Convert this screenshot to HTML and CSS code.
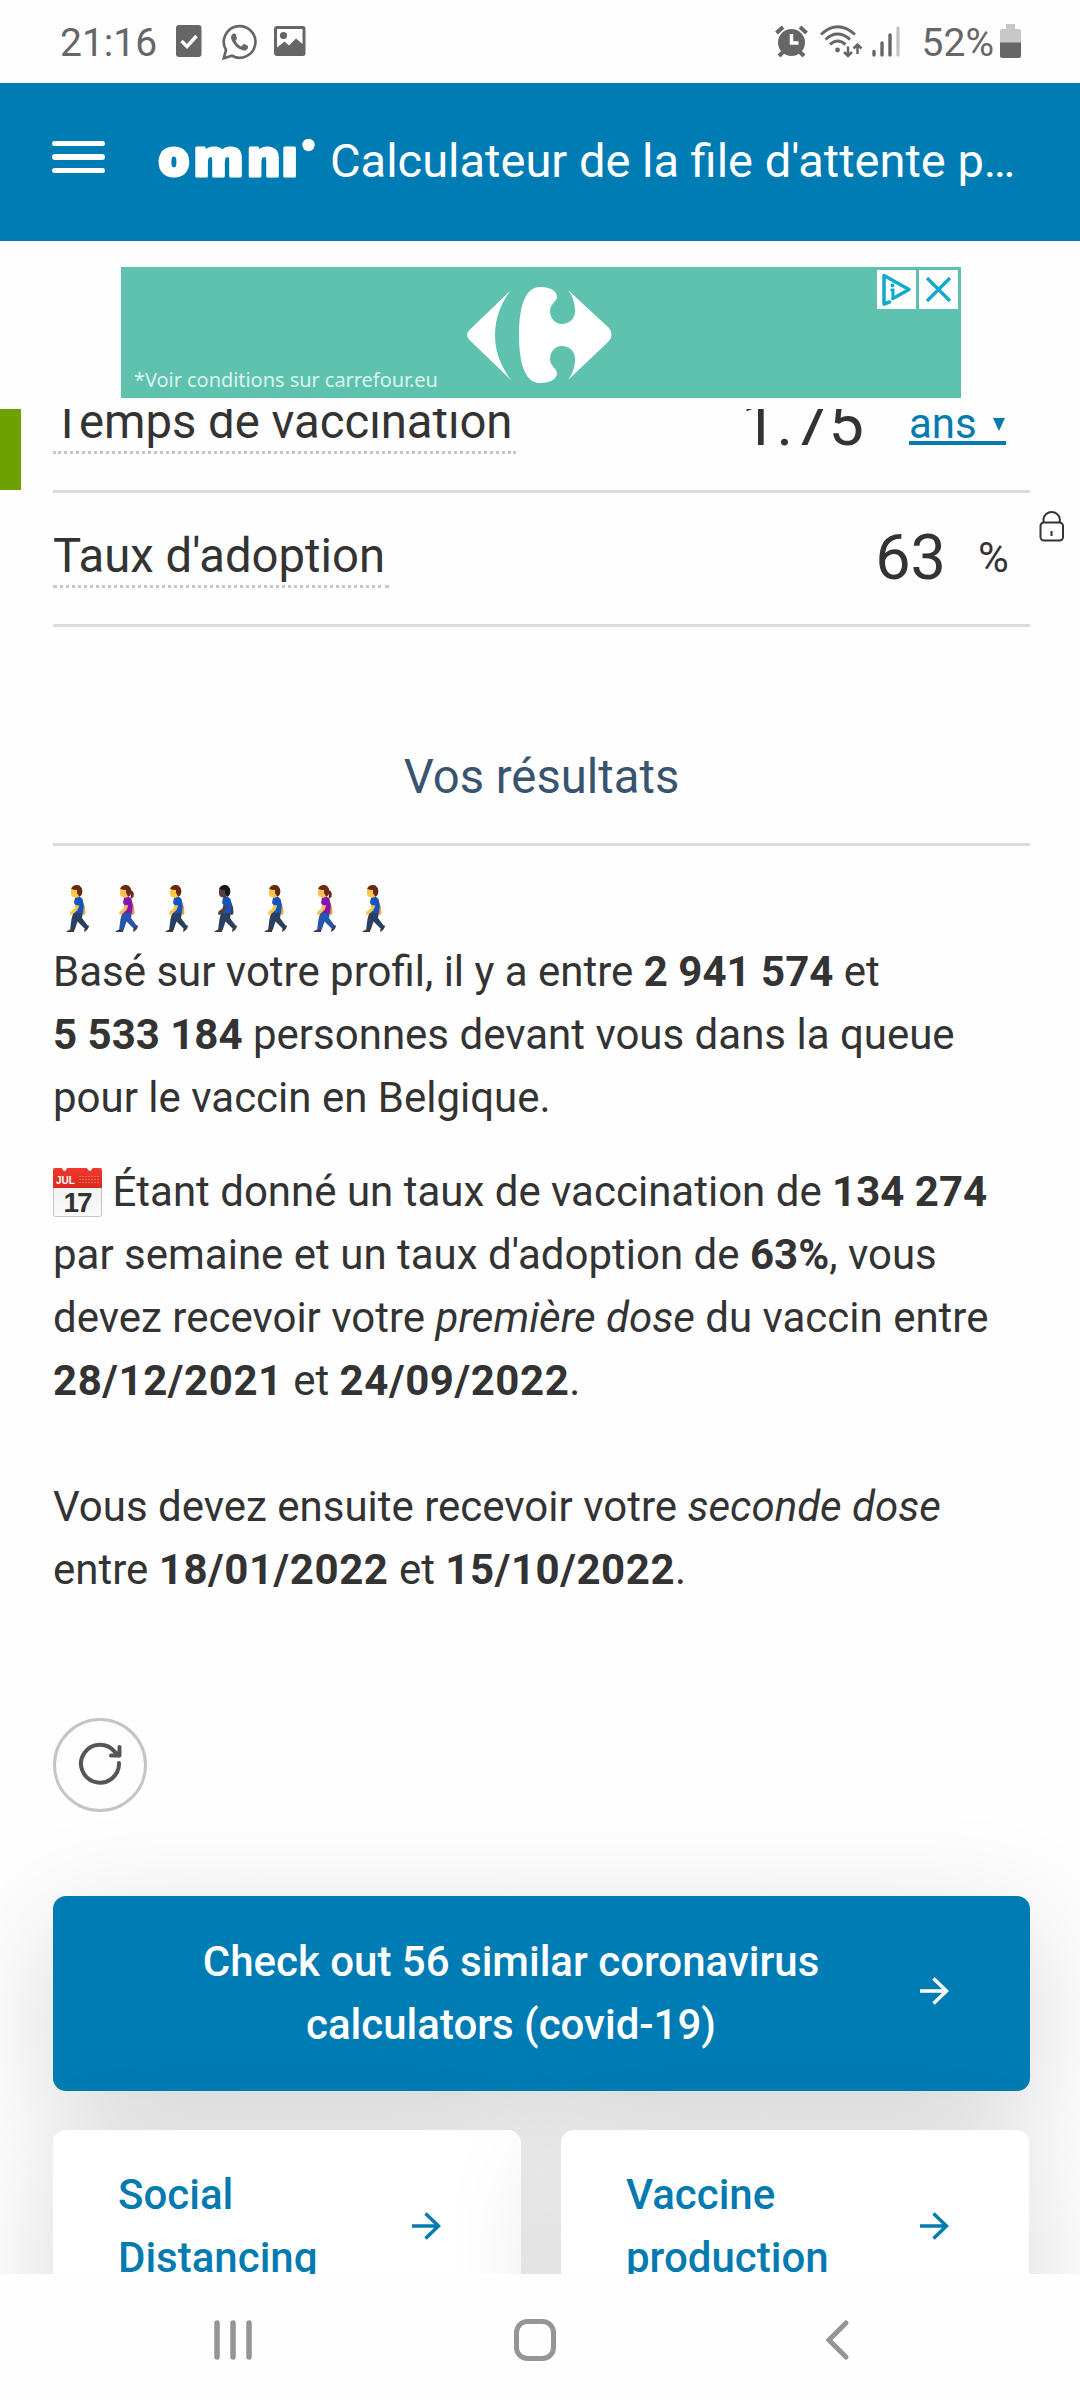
FILE: index.html
```html
<!DOCTYPE html>
<html lang="fr">
<head>
<meta charset="utf-8">
<title>Calculateur de la file d'attente</title>
<link rel="stylesheet" href="styles.css">
</head>
<body>
<svg class="defs" width="0" height="0">
  <defs>
    <linearGradient id="calRed" x1="0" y1="0" x2="0" y2="1"><stop offset="0" stop-color="#f0392c"/><stop offset="1" stop-color="#d92a20"/></linearGradient>
    <linearGradient id="calPaper" x1="0" y1="0" x2="0" y2="1"><stop offset="0" stop-color="#ececec"/><stop offset="1" stop-color="#fafafa"/></linearGradient>
    <g id="walker">
      <path class="far-arm" d="M17 17 L19 22 L19.5 28 L18 30.5 L15 27Z"/>
      <path class="legs" d="M7.5 27 H17 L16 33 L22 41 L19.5 44.5 L11.5 36.5 L8.5 45.5 H4 L5.5 34Z"/>
      <path class="shoe" d="M0.5 46.5 Q4 43.5 8 45 V47 H0.5Z M18.5 44 L22 40 L23 41 Q22 45.5 18 47Z"/>
      <path class="shirt" d="M9 12.5 Q14 10.5 16.5 14 L17.8 20 L17 28 H8 L9.5 20 L8 18Z"/>
      <path class="arm" d="M9.5 20 L13.3 20.5 L11.5 25 L6 30 L4 29.5 L4.5 26.5 L8.5 23.5Z"/>
      <path class="face" d="M5.5 3 Q9 0 13 4 L13.5 11 L10.5 13 L6 11.5 Q4 8 5.5 3Z"/>
      <path class="hair" d="M5 3.5 Q8 -1.5 13.5 0.5 Q18 4 15.5 10 L13.5 12 L11 8 V5 Q8 5.5 5 3.5Z"/>
    </g>
    <path id="ponytail" d="M14 5 Q20 5 18.5 12 L15.5 14 L16 9Z"/>
  </defs>
</svg>

<div class="status">
  <span class="clock">21:16</span>
  <svg class="st-task" width="26" height="32" viewBox="0 0 26 32"><rect width="25.5" height="32" rx="3" fill="#666"/><path d="M5.5 16 L11 21.5 L20.5 11" fill="none" stroke="#fff" stroke-width="3.5"/></svg>
  <svg class="st-wa" width="35" height="36" viewBox="0 0 35 36"><path d="M1.8 34.2 L4 26 A15.8 15.8 0 1 1 10 31.8 Z" fill="none" stroke="#666" stroke-width="2.7"/><path d="M11.5 9.5 C9 10.5 8.5 13 9.5 15.5 C12 21.5 16 25 21.5 26.5 C24 27 26.5 25 26 22 L22 19.8 L19.2 22.5 C17 21.5 14.5 19 13.5 17 L15 14.5 L13.5 9.8Z" fill="#666"/></svg>
  <svg class="st-pic" width="32" height="30" viewBox="0 0 32 30"><path fill-rule="evenodd" fill="#666" d="M3 0 H29 Q31.5 0 31.5 3 V27 Q31.5 30 29 30 H3 Q0 30 0 27 V3 Q0 0 3 0Z M3 3 V21.5 L10.5 15.5 L15 19.5 L22 12.5 L28.5 18 V3Z"/><circle cx="9.5" cy="9.5" r="3.6" fill="#666"/></svg>
  <span class="spacer"></span>
  <svg class="st-alarm" width="33" height="33" viewBox="0 0 33 33"><circle cx="16.5" cy="17.5" r="13.5" fill="#666"/><path d="M1.5 8 L8 2 M25 2 L31.5 8 M4 31 L8 27 M29 31 L25 27" stroke="#666" stroke-width="4"/><path d="M16.5 9 V18 H23.5" fill="none" stroke="#fff" stroke-width="3.5"/></svg>
  <svg class="st-wifi" width="43" height="33" viewBox="0 0 43 33"><g fill="none" stroke="#666" stroke-width="3"><path d="M1 9.5 Q17.5 -6 35 9.5"/><path d="M5.5 14.5 Q17.5 3.5 30 14.5"/><path d="M10 19.5 Q17.5 12.5 25.5 19.5"/><path d="M28 21.5 V31 M24 27 L28 31 L32 27 M37.5 29 V19 M33.5 23.5 L37.5 19.5 L41.5 23.5" stroke-width="2.5"/></g><circle cx="17.5" cy="25" r="2.4" fill="#666"/></svg>
  <svg class="st-signal" width="28" height="31" viewBox="0 0 28 31"><g stroke-width="3.4" stroke-linecap="round" stroke="#666"><path d="M2 25.5 V29 M10 17 V29 M18 9 V29"/><path d="M26 2 V29" stroke="#c6c6c6"/></g></svg>
  <span class="pct">52%</span>
  <svg class="st-batt" width="21" height="34" viewBox="0 0 21 34"><path d="M6 0 H15 V5 H19 Q21 5 21 7 V19 H0 V7 Q0 5 2 5 H6Z" fill="#c8c8c8"/><path d="M0 18.5 H21 V32 Q21 34 19 34 H2 Q0 34 0 32Z" fill="#666"/></svg>
</div>

<header class="bar">
  <div class="burger"><i></i><i></i><i></i></div>
  <svg class="logo" width="164" height="50" viewBox="0 0 164 50" role="img" aria-label="omni"><text class="logo-text" y="42" x="1 36.5 90 124.5">omnı</text><circle cx="151.5" cy="11" r="6.2" fill="#fff"/></svg>
  <span class="bar-title">Calculateur de la file d'attente p…</span>
</header>

<div class="ad-slot">
  <div class="ad">
    <span class="ad-note">*Voir conditions sur carrefour.eu</span>
    <svg class="ad-logo" width="146" height="98" viewBox="467 286 146 98"><path fill="#fff" d="M511 290 L469 330.5 Q465 335 469 339.5 L511 380 Q495 359 495 335 Q495 311 511 290Z M540 287 C553 287 557 293 557 297 C557 301 550 304 550 311 C550 318 555 324 562 324 C569 324 575 319 575 311 C575 303 573 297 568 290 L609 328 Q614 335 609 341 L568 380 C573 373 575 367 575 359 C575 351 569 346 562 346 C555 346 550 352 550 359 C550 366 557 369 557 373 C557 377 553 383 540 383 C524 383 519 360 519 335 C519 310 524 287 540 287Z"/></svg>
    <div class="ad-choices">
      <svg width="39" height="39" viewBox="0 0 39 39"><rect width="39" height="39" fill="#fff"/><path d="M12.5 32 L7 34 V5.5 L32 19.5 L16 28.5" fill="none" stroke="#10aacb" stroke-width="3.5" stroke-linejoin="round" stroke-linecap="round"/><path d="M13.5 20 H16 V29" fill="none" stroke="#10aacb" stroke-width="3"/><circle cx="15.5" cy="15.5" r="2" fill="#10aacb"/></svg>
      <svg width="39" height="39" viewBox="0 0 39 39"><rect width="39" height="39" fill="#fff"/><path d="M8 8 L31 31 M31 8 L8 31" stroke="#10aacb" stroke-width="3.3"/></svg>
    </div>
  </div>
</div>

<main class="page">
  <div class="row row-first">
    <span class="marker marker-on"></span>
    <div class="field">
      <span class="label">Temps de vaccination</span>
      <span class="value">1.75</span>
      <span class="unit"><a class="link">ans <svg width="12" height="13" viewBox="0 0 12 13"><path d="M0 0 H12 L6 13Z" fill="#047bb0"/></svg></a></span>
    </div>
  </div>
  <div class="row">
    <span class="marker"></span>
    <div class="field">
      <span class="label">Taux d'adoption</span>
      <span class="value">63</span>
      <span class="unit unit-percent">%</span>
    </div>
    <svg class="lock" width="26" height="32" viewBox="0 0 26 32"><g fill="none" stroke="#333" stroke-width="2"><rect x="1.5" y="12.5" width="22.5" height="18" rx="3.5"/><path d="M4.5 12.5 V9 A8.2 8 0 0 1 20.8 9 V12.5"/><path d="M12.5 21 V26"/></g></svg>
  </div>

  <section class="results">
    <h2 class="heading">Vos résultats</h2>
    <div class="people">
      <svg class="man" viewBox="0 0 24 48"><use href="#walker"/></svg>
      <svg class="woman" viewBox="0 0 24 48"><use href="#walker"/><use class="hair" href="#ponytail"/></svg>
      <svg class="man" viewBox="0 0 24 48"><use href="#walker"/></svg>
      <svg class="man dark" viewBox="0 0 24 48"><use href="#walker"/></svg>
      <svg class="man" viewBox="0 0 24 48"><use href="#walker"/></svg>
      <svg class="woman" viewBox="0 0 24 48"><use href="#walker"/><use class="hair" href="#ponytail"/></svg>
      <svg class="man" viewBox="0 0 24 48"><use href="#walker"/></svg>
    </div>
    <p class="text">Basé sur votre profil, il y a entre <b>2 941 574</b> et<br><b>5 533 184</b> personnes devant vous dans la queue<br>pour le vaccin en Belgique.</p>
    <p class="text"><svg class="calendar" width="49" height="49" viewBox="0 0 49 49"><rect x="0.5" y="0.5" width="48" height="48" rx="2" fill="url(#calPaper)" stroke="#c4c4c4"/><path d="M0 2 Q0 0 2 0 H9 Q11.5 6 14 0 H34 Q37 6 39.5 0 H47 Q49 0 49 2 V20 H0Z" fill="url(#calRed)"/><path d="M9 0 Q11.5 6 14 0Z M34 0 Q37 6 39.5 0Z" fill="#fff"/><path d="M26 8.5 H46 M26 11.5 H46 M26 14.5 H46" stroke="#f2685e" stroke-width="1" stroke-dasharray="2 1"/><text class="cal-month" x="3" y="16">JUL</text><text class="cal-day" x="24" y="44">17</text></svg> Étant donné un taux de vaccination de <b>134 274</b><br>par semaine et un taux d'adoption de <b>63%</b>, vous<br>devez recevoir votre <i>première dose</i> du vaccin entre<br><b class="date">28/12/2021</b> et <b class="date">24/09/2022</b>.<br><br>Vous devez ensuite recevoir votre <i>seconde dose</i><br>entre <b class="date">18/01/2022</b> et <b class="date">15/10/2022</b>.</p>
    <div class="refresh"><svg width="46" height="46" viewBox="0 0 46 46"><g fill="none" stroke="#555" stroke-width="4" stroke-linecap="round" stroke-linejoin="round"><path d="M42 23 A19 19 0 1 1 38 12 L42 15.5"/><path d="M42.5 7 V15.5 H34"/></g></svg></div>
  </section>

  <section class="related">
    <a class="cta"><span>Check out 56 similar coronavirus<br>calculators (covid-19)</span><svg class="arrow" width="29" height="30" viewBox="0 0 29 30"><path d="M0 15 H27 M13.5 2.5 L26.5 15 L13.5 27.5"/></svg></a>
    <div class="cards">
      <a class="card"><span>Social<br>Distancing</span><svg class="arrow" width="29" height="30" viewBox="0 0 29 30"><path d="M0 15 H27 M13.5 2.5 L26.5 15 L13.5 27.5"/></svg></a>
      <a class="card"><span>Vaccine<br>production</span><svg class="arrow" width="29" height="30" viewBox="0 0 29 30"><path d="M0 15 H27 M13.5 2.5 L26.5 15 L13.5 27.5"/></svg></a>
    </div>
  </section>
</main>

<nav class="nav">
  <svg width="40" height="42" viewBox="0 0 40 42"><path d="M3 4 V38 M19 4 V38 M35 4 V38" stroke="#959595" stroke-width="5.5" stroke-linecap="round"/></svg>
  <svg width="42" height="42" viewBox="0 0 42 42"><rect x="2.5" y="2.5" width="37" height="37" rx="11" fill="none" stroke="#959595" stroke-width="5"/></svg>
  <svg width="25" height="42" viewBox="0 0 25 42"><path d="M21 4 L4 21 L21 38" fill="none" stroke="#959595" stroke-width="5" stroke-linecap="round"/></svg>
</nav>
</body>
</html>
```
FILE: styles.css
```css
* { box-sizing: border-box; }
body {
  margin: 0;
  width: 1080px;
  height: 2400px;
  overflow: hidden;
  display: flex;
  flex-direction: column;
  background: #fefefe;
  color: #333;
  font-family: Roboto, "Liberation Sans", sans-serif;
  font-size: 42px;
  line-height: 63px;
  white-space: nowrap;
}
svg { display: block; flex: none; }

/* system status bar */
.status {
  height: 83px;
  flex: none;
  display: flex;
  align-items: center;
  padding: 0 59px 0 60px;
  color: #666;
  font-size: 39px;
}
.clock { width: 116px; margin-top: 3px; }
.st-task, .st-pic { margin-top: -1px; }
.st-wa { margin-left: 20px; }
.st-pic { margin-left: 17px; }
.spacer { flex: 1; }
.st-wifi { margin-left: 12px; }
.st-signal { margin-left: 9px; }
.pct { margin: 3px 6px 0 22px; }
.st-batt { margin-top: -2px; }

/* app header */
.bar {
  height: 158px;
  flex: none;
  display: flex;
  align-items: center;
  padding-left: 52px;
  background: #007cb4;
  color: #fff;
  font-size: 47px;
}
.burger { width: 53px; display: flex; flex-direction: column; gap: 8px; margin-top: -10px; }
.burger i { height: 5.5px; border-radius: 3px; background: #fff; }
.logo { margin-left: 52px; margin-top: -6px; overflow: visible; }
.logo-text { font: 800 50px "Open Sans", sans-serif; fill: #fff; stroke: #fff; stroke-width: 3px; stroke-linejoin: round; }
.bar-title { margin-left: 9px; margin-top: -4px; }

/* banner */
.ad-slot { height: 168px; flex: none; padding-top: 26px; padding-left: 121px; }
.ad {
  width: 840px;
  height: 131px;
  background: #5fc2ae;
  display: flex;
  align-items: flex-start;
}
.ad-note { align-self: flex-end; width: 346px; padding-left: 13px; font: 400 20px/36px "Noto Sans", sans-serif; letter-spacing: -.05px; color: #d9f5ee; }
.ad-logo { margin-top: 19px; }
.ad-choices { display: flex; gap: 3px; margin: 3px 3px 0 auto; }

/* calculator content */
.page { height: 1865px; flex: none; overflow: hidden; background: #fefefe; }
.row { display: flex; height: 134px; }
.row-first { margin-top: -50px; }
.marker { width: 21px; height: 131px; margin-right: 32px; }
.marker-on { background: #6ca100; }
.field { width: 977px; display: flex; align-items: center; border-bottom: 3px solid #d9dbdf; }
.label { font-size: 47.25px; line-height: 55px; padding: 0 4px 1px 0; border-bottom: 3px dotted #c4c7c9; }
.value { margin-left: auto; font-size: 63px; margin-top: -2px; }
.unit { width: 166px; padding-left: 45px; margin-top: -3px; }
.unit-percent { width: 84px; padding-left: 32px; }
.link { display: inline-flex; align-items: center; width: 97px; height: 39px; justify-content: space-between; padding-right: 1px; border-bottom: 4px solid #047bb0; color: #047bb0; }
.link svg { margin-top: 2px; }
.lock { margin: 17px 0 0 9px; }

.results { padding: 0 50px 0 53px; }
.heading { margin: 0; padding: 115px 0 31px; font-size: 47.25px; line-height: 70px; font-weight: 400; text-align: center; color: #39546e; border-bottom: 3px solid #d9dbdf; }
.people { display: flex; gap: 25.4px; padding: 39px 0 7px 13px; height: 94px; }
.people svg { width: 24px; height: 48px; }
.far-arm { fill: var(--skin-far); }
.arm { fill: var(--skin); }
.face { fill: var(--skin); }
.hair { fill: var(--hair); }
.shirt { fill: var(--shirt); }
.legs { fill: var(--legs); }
.shoe { fill: #3c3c3f; }
.man { --skin: #fbc945; --skin-far: #e0ac49; --hair: #642a10; --shirt: #1553bd; --legs: #2b3f60; }
.woman { --skin: #fbc057; --skin-far: #dfa050; --hair: #6a2a14; --shirt: #8715ad; --legs: #2756b0; }
.dark { --skin: #54403c; --skin-far: #493735; --hair: #171719; }
.text { margin: 0 0 31px; }
.date { letter-spacing: .58px; }
.calendar { display: inline-block; vertical-align: -11px; }
.cal-month { font: bold 10px "Liberation Sans", sans-serif; fill: #fff; }
.cal-day { font: bold 28px "Liberation Sans", sans-serif; fill: #333; text-anchor: middle; letter-spacing: -2px; }
.refresh { width: 94px; height: 94px; margin-top: 117px; border: 3px solid #c2c6c9; border-radius: 50%; display: flex; align-items: center; justify-content: center; padding-bottom: 4px; }

.related { padding: 84px 50px 0 53px; font-weight: 500; }
.cta, .card { display: flex; border-radius: 13px; box-shadow: 0 32px 120px rgba(0, 0, 0, .155); }
.cta { height: 195px; align-items: center; background: #007cb4; color: #fff; text-align: center; padding: 0 0 2px 65px; }
.cta span { width: 786px; }
.cards { display: flex; gap: 40px; margin-top: 39px; }
.card { width: 468px; height: 192px; align-items: center; justify-content: space-between; padding: 0 80px 1px 65px; background: #fff; color: #047bb0; }
.cta .arrow { margin: -3px 0 0 16px; }
.arrow { fill: none; stroke: currentColor; stroke-width: 3.5px; }

/* system navigation */
.nav { height: 126px; flex: none; display: flex; padding: 45px 0 0 214px; background: #fefefe; }
.nav svg + svg { margin-left: 260px; }
.nav svg:last-child { margin-left: 269px; }
```
